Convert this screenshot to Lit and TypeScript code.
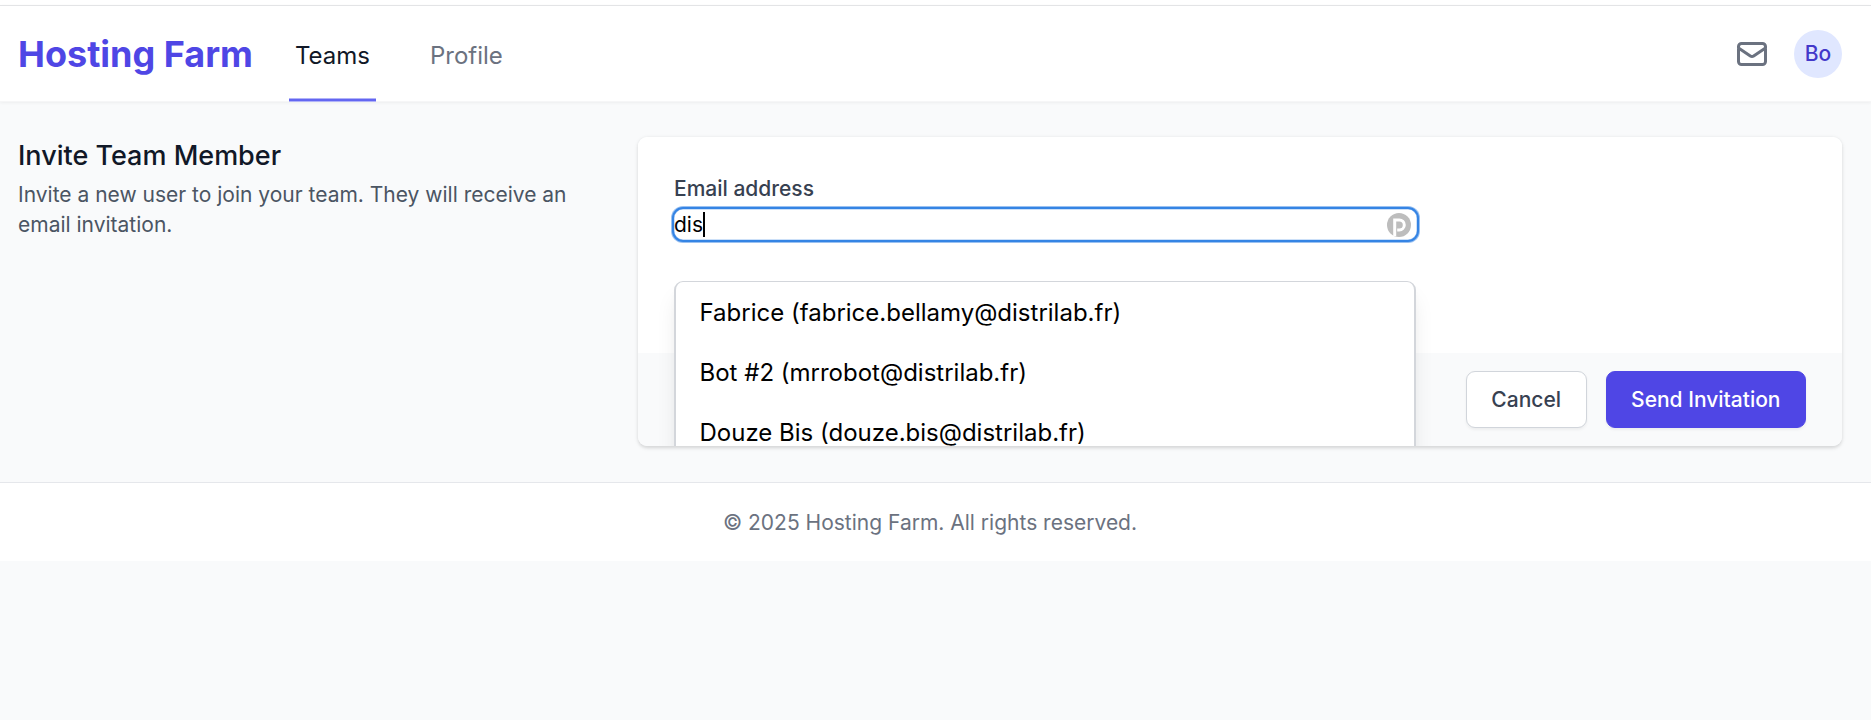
import { LitElement, html, css } from "lit";
import { customElement, property, state } from "lit/decorators.js";

interface Member {
  name: string;
  email: string;
}

@customElement("site-header")
class SiteHeader extends LitElement {
  @property() current = "Teams";

  static styles = css`
    :host {
      display: block;
      background: #fff;
      border-top: 1px solid #e3e4e6;
      border-bottom: 1px solid #f6f6f7;
      box-shadow: 0 1px 3px rgba(0, 0, 0, 0.05);
    }
    .bar {
      display: flex;
      align-items: stretch;
      height: 95px;
      padding: 0 29px 0 18px;
    }
    .brand {
      display: flex;
      align-items: center;
      font-size: 36px;
      line-height: 48px;
      font-weight: 700;
      color: #4f46e5;
      margin-right: 36px;
      padding-top: 1px;
    }
    nav {
      display: flex;
      flex: 1;
      gap: 48px;
      margin-bottom: -1px;
    }
    .link {
      display: flex;
      align-items: center;
      padding: 7px 6px 4px 6px;
      color: #6b7280;
      font-size: 24px;
      line-height: 36px;
    }
    .link.active {
      background: linear-gradient(#b1b3f8 1px, #6366f1 1px, #6366f1 3px, #b1b3f8 3px) bottom / 100% 4px no-repeat;
      color: #111827;
    }
    .actions {
      display: flex;
      align-items: center;
      gap: 24px;
    }
    .mail {
      width: 36px;
      height: 36px;
      color: #6b7280;
    }
    .avatar {
      display: flex;
      align-items: center;
      justify-content: center;
      width: 48px;
      height: 48px;
      border-radius: 50%;
      background: #e0e7ff;
      color: #4338ca;
      font-size: 21px;
      font-weight: 500;
    }
  `;

  render() {
    return html`
      <div class="bar">
        <div class="brand">Hosting Farm</div>
        <nav>
          ${["Teams", "Profile"].map(
            (l) => html`<span class="link ${l === this.current ? "active" : ""}">${l}</span>`
          )}
        </nav>
        <div class="actions">
          <svg class="mail" viewBox="0 0 24 24" fill="none" stroke="currentColor" stroke-width="2" stroke-linecap="round" stroke-linejoin="round">
            <path d="M3 8l7.89 5.26a2 2 0 002.22 0L21 8M5 19h14a2 2 0 002-2V7a2 2 0 00-2-2H5a2 2 0 00-2 2v10a2 2 0 002 2z" />
          </svg>
          <div class="avatar">Bo</div>
        </div>
      </div>
    `;
  }
}

@customElement("invite-card")
class InviteCard extends LitElement {
  @state() private query = "dis";
  @state() private members: Member[] = [
    { name: "Fabrice", email: "fabrice.bellamy@distrilab.fr" },
    { name: "Bot #2", email: "mrrobot@distrilab.fr" },
    { name: "Douze Bis", email: "douze.bis@distrilab.fr" },
  ];

  static styles = css`
    :host {
      display: block;
      position: relative;
      overflow: hidden;
      border-radius: 9px;
      box-shadow: 0 1.5px 4.5px rgba(0, 0, 0, 0.1), 0 1.5px 3px rgba(0, 0, 0, 0.06);
    }
    .body {
      box-sizing: border-box;
      height: 216px;
      padding: 37px 36px 36px;
      background: #fff;
    }
    .field {
      position: relative;
      width: 742.67px;
    }
    .label {
      font-size: 21px;
      line-height: 30px;
      font-weight: 500;
      color: #374151;
    }
    .input {
      display: flex;
      align-items: center;
      height: 31px;
      margin-top: 5px;
      padding-right: 6px;
      border-radius: 9px;
      outline: 2px solid #3584e4;
      box-shadow: 0 0 0 3px #9ac1f1, inset 0 0 0 0.5px #9ac1f1;
      font-size: 21px;
      line-height: 30px;
      color: #000;
    }
    .caret {
      width: 2px;
      height: 25px;
      background: #000;
    }
    .badge {
      width: 24px;
      height: 24px;
      margin-left: auto;
    }
    .menu {
      position: absolute;
      top: 107px;
      left: 0;
      box-sizing: border-box;
      width: 742px;
      padding-top: 1px;
      border: solid #d3d6db;
      border-width: 1px 2px;
      border-radius: 9px;
      background: #fff;
      box-shadow: 0 15px 22.5px -4.5px rgba(0, 0, 0, 0.1), 0 6px 9px -3px rgba(0, 0, 0, 0.05);
    }
    .option {
      padding: 12px 23.5px;
      font-size: 24px;
      line-height: 36px;
      color: #000;
    }
    .foot {
      display: flex;
      justify-content: flex-end;
      gap: 19px;
      padding: 18px 36px;
      background: #f9fafb;
    }
    .btn {
      padding: 12.5px 24.5px;
      border: 1px solid #d1d5db;
      border-radius: 9px;
      background: #fff;
      color: #374151;
      font-size: 21px;
      line-height: 30px;
      font-weight: 500;
      box-shadow: 0 1.5px 3px rgba(0, 0, 0, 0.05);
    }
    .btn.primary {
      border-color: #4f46e5;
      background: #4f46e5;
      color: #fff;
    }
  `;

  render() {
    return html`
      <div class="body">
        <div class="field">
          <div class="label">Email address</div>
          <div class="input">
            <span>${this.query}</span><i class="caret"></i>
            <svg class="badge" viewBox="0 0 24 24">
              <circle cx="12" cy="12" r="12" fill="#bdbdbd" />
              <path d="M7.700 23.200V6.900H12.300A5 5 0 0 1 12.300 16.900H10.200" fill="none" stroke="#fff" stroke-width="3" />
            </svg>
          </div>
          <div class="menu">
            ${this.members.map((m) => html`<div class="option">${m.name} (${m.email})</div>`)}
          </div>
        </div>
      </div>
      <div class="foot">
        <div class="btn">Cancel</div>
        <div class="btn primary">Send Invitation</div>
      </div>
    `;
  }
}

@customElement("app-root")
class AppRoot extends LitElement {
  static styles = css`
    :host {
      display: block;
      box-sizing: border-box;
      min-height: 720px;
      padding-top: 5px;
      background: linear-gradient(#fff 5px, #f9fafb 5px);
      font-family: Inter, "Liberation Sans", sans-serif;
    }
    main {
      display: grid;
      grid-template-columns: 584px 1204px;
      align-items: start;
      gap: 36px;
      padding: 35px 29px 36px 18px;
    }
    section {
      padding-top: 1px;
    }
    h1 {
      margin: 0;
      font-size: 27px;
      line-height: 36px;
      font-weight: 500;
      color: #111827;
    }
    .lead {
      margin: 6px 0 0;
      font-size: 21px;
      line-height: 30px;
      color: #4b5563;
    }
    footer {
      padding: 25px 29px 23px 18px;
      border-top: 1px solid #e5e7eb;
      background: #fff;
      text-align: center;
      font-size: 21px;
      line-height: 30px;
      color: #6b7280;
    }
  `;

  render() {
    return html`
      <site-header current="Teams"></site-header>
      <main>
        <section>
          <h1>Invite Team Member</h1>
          <p class="lead">Invite a new user to join your team. They will receive an email invitation.</p>
        </section>
        <invite-card></invite-card>
      </main>
      <footer>© 2025 Hosting Farm. All rights reserved.</footer>
    `;
  }
}
